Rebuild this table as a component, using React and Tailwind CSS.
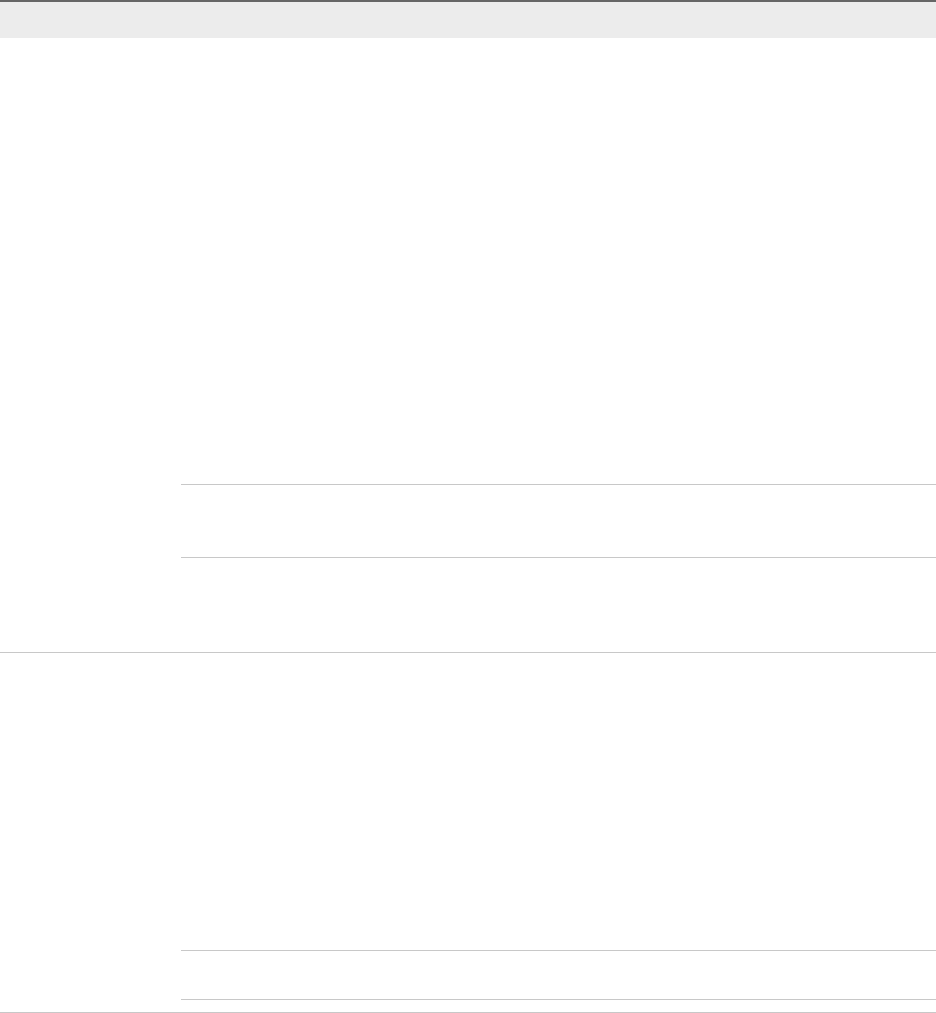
import React from 'react';

// empty two-level table: grey header, label column + nested sub-rows
const line = 'border-[#c8c8c8]';

function Row({ topClass, midClass, tailClass }) {
  return (
    <div className={`flex border-b ${line}`}>
      <div className="w-[181px] shrink-0" />
      <div className="flex-1 flex flex-col">
        <div className={topClass} />
        <div className={`border-t ${line} ${midClass}`} />
        <div className={`border-t ${line} ${tailClass}`} />
      </div>
    </div>
  );
}

export default function App() {
  return (
    <div className="w-[936px] h-[1013px] bg-white overflow-hidden font-['Liberation_Sans',Arial,sans-serif]">
      <div className="h-[38px] border-t-2 border-[#666666] bg-[#ececec]" />
      <Row topClass="h-[446px]" midClass="h-[73px]" tailClass="h-[95px]" />
      <Row topClass="h-[297px]" midClass="h-[49px]" tailClass="h-[13px]" />
    </div>
  );
}
